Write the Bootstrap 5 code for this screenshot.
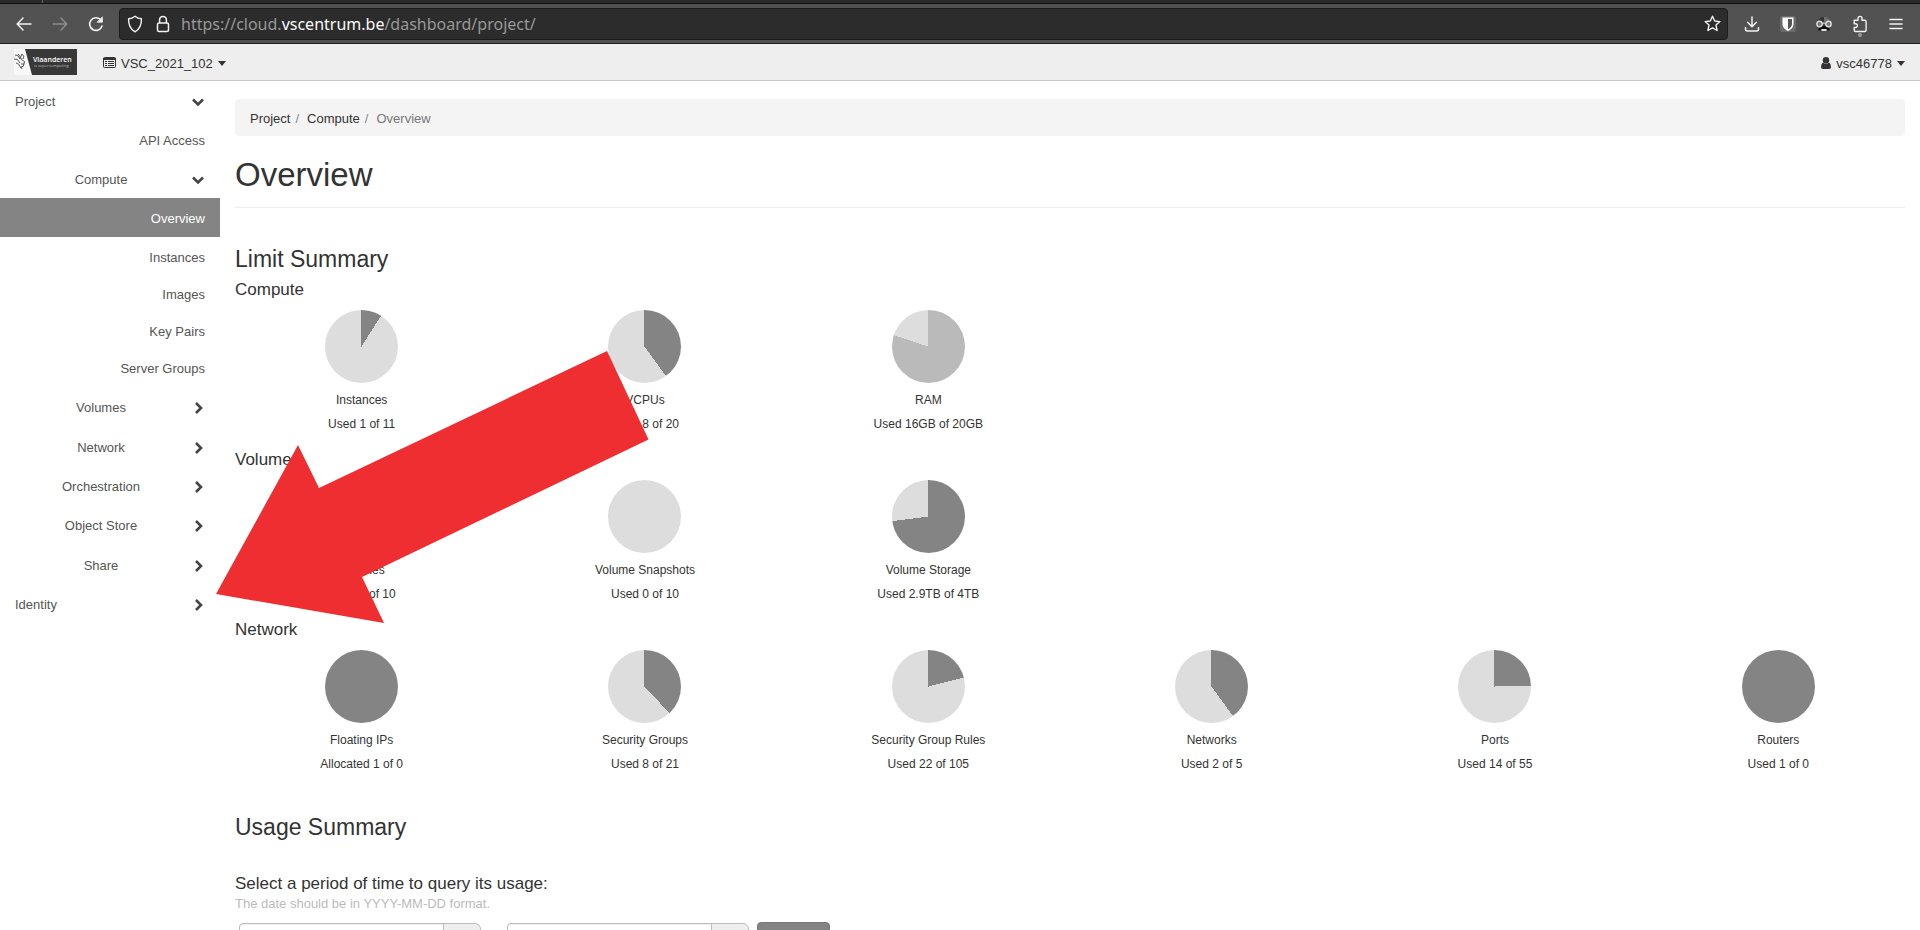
<!DOCTYPE html>
<html lang="en">
<head>
<meta charset="utf-8">
<meta name="viewport" content="width=device-width, initial-scale=1">
<title>Overview - OpenStack Dashboard</title>
<link rel="stylesheet" href="https://cdn.jsdelivr.net/npm/bootstrap@5.3.0/dist/css/bootstrap.min.css">
<style>
  body { font: 13px/19px "Liberation Sans", Arial, sans-serif; color: #333; background: #fff; }
  a { color: inherit; text-decoration: none; }
  svg { display: block; flex: none; }

  /* browser chrome */
  .tab-strip { height: 4px; background: #2a2a2a; border-bottom: 1px solid #111; }
  .tab-edge { width: 43px; border-right: 1px solid #666; }
  .toolbar { height: 40px; background: #525252; border-bottom: 1px solid #1a1a1a; padding: 0 12px; gap: 12px; }
  .tool { width: 24px; height: 24px; padding: 0; border: 0; background: none; color: #f2f2f2; display: flex; align-items: center; justify-content: center; position: relative; }
  .tool:disabled { color: #8c8c8c; }
  .tool-dot::after { content: ""; position: absolute; left: 10px; top: 21px; width: 4px; height: 4px; border-radius: 50%; background: #9a9a9a; }
  .address { height: 32px; margin-left: -1px; background: #2c2c2c; border: 1px solid #1c1c1c; border-radius: 4px; padding: 0 3px; }
  .address-text { font: 16px/24px "Noto Sans", sans-serif; color: #989898; margin-left: 6px; }
  .address-text b { font-weight: 400; color: #fbfbfb; }

  /* dashboard header */
  .topbar { height: 37px; background: #eee; border-bottom: 1px solid #c8c8c8; padding: 0 15px 0 14px; gap: 26px; }
  .menu-btn { border: 0; padding: 2px 0 0; background: none; color: #333; display: flex; align-items: center; gap: 5px; }
  .caret { border: 4px solid transparent; border-top: 5px solid #333; border-bottom: 0; }

  /* sidebar */
  .side { width: 220px; flex: none; color: #555; }
  .side-item { height: 39px; width: 100%; padding: 2px 15px 0; border: 0; background: none; color: #555; display: flex; align-items: center; gap: 5px; }
  .side-item svg { margin-right: 1px; }
  .side-item span { flex: 1; text-align: left; }
  .side-group span { text-align: center; }
  .side-leaf span { text-align: right; }
  .side-item.current { background: #848484; color: #fff; }
  .panel-list { padding: 1px 0; }
  .panel-list .side-item { height: 37px; }
  .closed-panels { padding-top: 1px; }

  /* content */
  .content { padding: 18px 15px 0; }
  .crumbs { background: #f4f4f4; border-radius: 4px; padding: 10px 15px 8px; margin: 0 0 19px; gap: 8px; }
  .crumbs li + li::before { content: none; }
  .crumbs li:not(:last-child)::after { content: "/"; color: #888; margin-left: 5px; }
  .crumbs .here { color: #777; }
  h1 { font-size: 33px; line-height: 40px; margin: 0 0 12px; font-weight: 400; }
  h2 { font-size: 23px; line-height: 26px; margin: 0; font-weight: 400; }
  h3 { font-size: 17px; line-height: 20px; margin: 0; font-weight: 400; }
  .page-head { border-bottom: 1px solid #eee; margin-bottom: 38px; }
  .quota-row { --bs-gutter-x: 30px; height: 150px; padding-top: 10px; font-size: 12px; text-align: center; }
  .pie { width: 73px; height: 73px; border-radius: 50%; margin: 0 auto 8px; background: conic-gradient(var(--c, #848484) var(--p), #ddd 0); }
  .quota-row p { margin: 0 0 5px; }
  .usage-title { padding: 24px 0 34px; }
  .hint { color: #bbb; }
  .period { gap: 26px; margin: 9px 0 0 4px; }
  .date-box { width: 242px; height: 32px; }
  .date-box .form-control { border: 1px solid #bbb; border-radius: 4px 0 0 4px; font-size: 13px; box-shadow: inset 0 1px 1px #0001; }
  .date-box .input-group-text { width: 38px; background: #eee; border-color: #bbb; }
  .submit { width: 73px; height: 34px; background: #848484; border: 1px solid #777; border-radius: 4px; margin-left: -18px; }
  .pointer { position: absolute; left: 216px; top: 270px; pointer-events: none; }
</style>
</head>
<body class="vh-100 overflow-hidden d-flex flex-column">

<div class="tab-strip flex-shrink-0 d-flex"><div class="tab-edge"></div></div>
<div class="toolbar d-flex align-items-center flex-shrink-0">
  <button class="tool" aria-label="Back"><svg width="16" height="16" fill="none" stroke="currentColor" stroke-width="1.5" stroke-linecap="round" stroke-linejoin="round"><path d="M15 8H1.5M7 2L1.2 8L7 14"/></svg></button>
  <button class="tool" aria-label="Forward" disabled><svg width="16" height="16" fill="none" stroke="currentColor" stroke-width="1.5" stroke-linecap="round" stroke-linejoin="round"><path d="M1 8H14.5M9 2L14.8 8L9 14"/></svg></button>
  <button class="tool" aria-label="Reload"><svg width="16" height="16" fill="none" stroke="currentColor" stroke-width="1.6" stroke-linecap="round" stroke-linejoin="round"><path d="M14 10A6.300 6.300 0 1 1 12.600 3.800L14 5.400"/><path d="M14.400 1.200V6.200H9.400Z" fill="currentColor" stroke-width=".8"/></svg></button>
  <div class="address flex-grow-1 d-flex align-items-center">
    <button class="tool" aria-label="Tracking protection"><svg width="16" height="18" fill="none" stroke="currentColor" stroke-width="1.4" stroke-linejoin="round"><path d="M8 1.2C10 2.8 12 3.6 14.4 3.8C14.6 9.5 13 14.2 8 16.8C3 14.2 1.4 9.5 1.6 3.8C4 3.6 6 2.8 8 1.2Z"/></svg></button>
    <button class="tool ms-1" aria-label="Connection"><svg width="14" height="18" fill="none" stroke="currentColor" stroke-width="1.5"><rect x="1.5" y="8" width="11" height="8.5" rx="1.5"/><path d="M3.6 8V4.8A3.4 3.4 0 0 1 10.4 4.8V8"/></svg></button>
    <div class="address-text flex-grow-1">https://cloud.<b>vscentrum.be</b>/dashboard/project/</div>
    <button class="tool" aria-label="Bookmark"><svg width="17" height="17" viewBox="0 0 17 17" fill="none" stroke="currentColor" stroke-width="1.4" stroke-linejoin="round"><path d="M8.5 1.2L10.7 6L15.9 6.6L12 10.1L13.1 15.5L8.5 12.8L3.9 15.5L5 10.1L1.1 6.6L6.3 6Z"/></svg></button>
  </div>
  <button class="tool" aria-label="Downloads"><svg width="16" height="16" fill="none" stroke="currentColor" stroke-width="1.5" stroke-linecap="round" stroke-linejoin="round"><path d="M8 1V10.5M3.6 6.3L8 10.7L12.4 6.3M1.5 11.5V13A2 2 0 0 0 3.5 15H12.5A2 2 0 0 0 14.5 13V11.5"/></svg></button>
  <button class="tool" aria-label="Password manager"><svg width="16" height="16"><rect width="16" height="16" rx="2" fill="#6b6b6b"/><path d="M2.5 1.5H13.5V8C13.5 11.5 11 13.500 8 15C5 13.500 2.500 11.500 2.500 8Z" fill="#fff"/><path d="M8 3H12V8C12 10.500 10.300 12 8 13.300Z" fill="#555"/></svg></button>
  <button class="tool" aria-label="Disguise"><svg width="16" height="16"><path d="M2 6C2 3 4.500 1 8 1S14 3 14 6Z" fill="#333"/><path d="M8 1C12 1 14 3 14 6H8Z" fill="#6e6e6e"/><path d="M2.500 14.500V12Q8 7 13.500 12V14.500H11V13H5V14.500Z" fill="#111"/><path d="M5.500 13H10.500V15H5.500Z" fill="#ddd"/><circle cx="3.500" cy="8" r="2.700" fill="#777" stroke="#ddd" stroke-width="1.400"/><circle cx="12.500" cy="8" r="2.700" fill="#777" stroke="#ddd" stroke-width="1.400"/><path d="M6 7.500Q8 6.500 10 7.500" stroke="#ddd" fill="none"/></svg></button>
  <button class="tool tool-dot" aria-label="Extensions"><svg width="16" height="18" fill="none" stroke="currentColor" stroke-width="1.400" stroke-linejoin="round"><path d="M2.200 5.200H6V3.400A2 2 0 0 1 10 3.400V5.200H12.600A1.500 1.500 0 0 1 14.100 6.700V15A1.500 1.500 0 0 1 12.600 16.500H3.700A1.500 1.500 0 0 1 2.200 15V12.500H3.500A1.900 1.900 0 0 0 3.500 8.700H2.200Z"/></svg></button>
  <button class="tool" aria-label="Menu"><svg width="14" height="14" stroke="currentColor" stroke-width="1.5" stroke-linecap="round"><path d="M1 2.5H13M1 7H13M1 11.5H13"/></svg></button>
</div>

<header class="topbar d-flex align-items-center flex-shrink-0">
  <a href="#" aria-label="Vlaanderen is supercomputing"><svg width="63" height="26">
    <rect width="20" height="26" fill="#f8f8f8"/><path d="M11 0H63V26H18Z" fill="#383838"/>
    <g fill="none" stroke="#444" stroke-width=".9"><path d="M1 6Q4 5 6 10M0 10Q4 9 6 14M2 14Q5 14 7 19M4 5Q7 7 6 10M8 5Q5 9 8 11M8 5Q11 7 9 10M8 11Q12 12 10 15H7M10 15Q10 18 7 18L8 20"/></g>
    <text x="19" y="13" fill="#fff" font-family="Open Sans, sans-serif" font-size="7" font-weight="600">Vlaanderen</text>
    <text x="20" y="18" fill="#bbb" font-family="Open Sans, sans-serif" font-size="4">is supercomputing</text>
  </svg></a>
  <button class="menu-btn"><svg width="13" height="12"><rect x=".5" y=".5" width="12" height="10" rx="1" fill="none" stroke="#333"/><path d="M0 1H13V3H0ZM2 4H4V5H2ZM5 4H11V5H5ZM2 6H4V7H2ZM5 6H11V7H5ZM2 8H4V9H2ZM5 8H11V9H5Z" fill="#333"/></svg>VSC_2021_102<span class="caret"></span></button>
  <button class="menu-btn ms-auto"><svg width="10" height="12" fill="#333"><circle cx="5" cy="3.2" r="3.2"/><path d="M2 5.5Q5 8 8 5.5Q10 6.5 10 10Q10 12 8 12H2Q0 12 0 10Q0 6.5 2 5.5Z"/></svg>vsc46778<span class="caret"></span></button>
</header>

<svg width="0" height="0" class="position-absolute">
  <symbol id="down" viewBox="0 0 12 12"><path d="M1 3.500L6 8.500L11 3.500" fill="none" stroke="#444" stroke-width="2.600"/></symbol>
  <symbol id="right" viewBox="0 0 12 12"><path d="M4 1L9 6L4 11" fill="none" stroke="#444" stroke-width="2.600"/></symbol>
</svg>

<div class="d-flex flex-grow-1">
  <nav class="side" aria-label="Dashboard">
    <button class="side-item"><span>Project</span><svg width="12" height="12"><use href="#down"/></svg></button>
    <a href="#" class="side-item side-leaf"><span>API Access</span></a>
    <button class="side-item side-group"><span>Compute</span><svg width="12" height="12"><use href="#down"/></svg></button>
    <a href="#" class="side-item side-leaf current" aria-current="page"><span>Overview</span></a>
    <div class="panel-list">
      <a href="#" class="side-item side-leaf"><span>Instances</span></a>
      <a href="#" class="side-item side-leaf"><span>Images</span></a>
      <a href="#" class="side-item side-leaf"><span>Key Pairs</span></a>
      <a href="#" class="side-item side-leaf"><span>Server Groups</span></a>
    </div>
    <button class="side-item side-group"><span>Volumes</span><svg width="12" height="12"><use href="#right"/></svg></button>
    <div class="closed-panels">
      <button class="side-item side-group"><span>Network</span><svg width="12" height="12"><use href="#right"/></svg></button>
      <button class="side-item side-group"><span>Orchestration</span><svg width="12" height="12"><use href="#right"/></svg></button>
      <button class="side-item side-group"><span>Object Store</span><svg width="12" height="12"><use href="#right"/></svg></button>
    </div>
    <div class="closed-panels">
      <button class="side-item side-group"><span>Share</span><svg width="12" height="12"><use href="#right"/></svg></button>
      <button class="side-item"><span>Identity</span><svg width="12" height="12"><use href="#right"/></svg></button>
    </div>
  </nav>

  <main class="content flex-grow-1">
    <ol class="crumbs breadcrumb">
      <li><a href="#">Project</a></li>
      <li><a href="#">Compute</a></li>
      <li class="here">Overview</li>
    </ol>
    <div class="page-head"><h1>Overview</h1></div>

    <h2 class="mb-2">Limit Summary</h2>
    <h3>Compute</h3>
    <div class="row quota-row">
      <div class="col-2"><div class="pie" style="--p:9%"></div><p>Instances</p><p>Used 1 of 11</p></div>
      <div class="col-2"><div class="pie" style="--p:40%"></div><p>VCPUs</p><p>Used 8 of 20</p></div>
      <div class="col-2"><div class="pie" style="--p:80%;--c:#bababa"></div><p>RAM</p><p>Used 16GB of 20GB</p></div>
    </div>
    <h3>Volume</h3>
    <div class="row quota-row">
      <div class="col-2"><div class="pie" style="--p:40%"></div><p>Volumes</p><p>Used 4 of 10</p></div>
      <div class="col-2"><div class="pie" style="--p:0%"></div><p>Volume Snapshots</p><p>Used 0 of 10</p></div>
      <div class="col-2"><div class="pie" style="--p:73%"></div><p>Volume Storage</p><p>Used 2.9TB of 4TB</p></div>
    </div>
    <h3>Network</h3>
    <div class="row quota-row">
      <div class="col-2"><div class="pie" style="--p:100%"></div><p>Floating IPs</p><p>Allocated 1 of 0</p></div>
      <div class="col-2"><div class="pie" style="--p:38%"></div><p>Security Groups</p><p>Used 8 of 21</p></div>
      <div class="col-2"><div class="pie" style="--p:21%"></div><p>Security Group Rules</p><p>Used 22 of 105</p></div>
      <div class="col-2"><div class="pie" style="--p:40%"></div><p>Networks</p><p>Used 2 of 5</p></div>
      <div class="col-2"><div class="pie" style="--p:25%"></div><p>Ports</p><p>Used 14 of 55</p></div>
      <div class="col-2"><div class="pie" style="--p:100%"></div><p>Routers</p><p>Used 1 of 0</p></div>
    </div>

    <h2 class="usage-title">Usage Summary</h2>
    <h3>Select a period of time to query its usage:</h3>
    <div class="hint">The date should be in YYYY-MM-DD format.</div>
    <form class="period d-flex align-items-center">
      <div class="input-group date-box"><input class="form-control" type="text" aria-label="From"><span class="input-group-text"></span></div>
      <div class="input-group date-box"><input class="form-control" type="text" aria-label="To"><span class="input-group-text"></span></div>
      <button class="submit" type="button" aria-label="Submit"></button>
    </form>
  </main>
</div>

<svg class="pointer" width="434" height="354" viewBox="216 270 434 354" aria-hidden="true"><path d="M216 594L298 445L319 488L607 351L648.500 439.500L362 577L384 623Z" fill="#ee2e31"/></svg>
<script src="https://cdn.jsdelivr.net/npm/bootstrap@5.3.0/dist/js/bootstrap.bundle.min.js"></script>
</body>
</html>
